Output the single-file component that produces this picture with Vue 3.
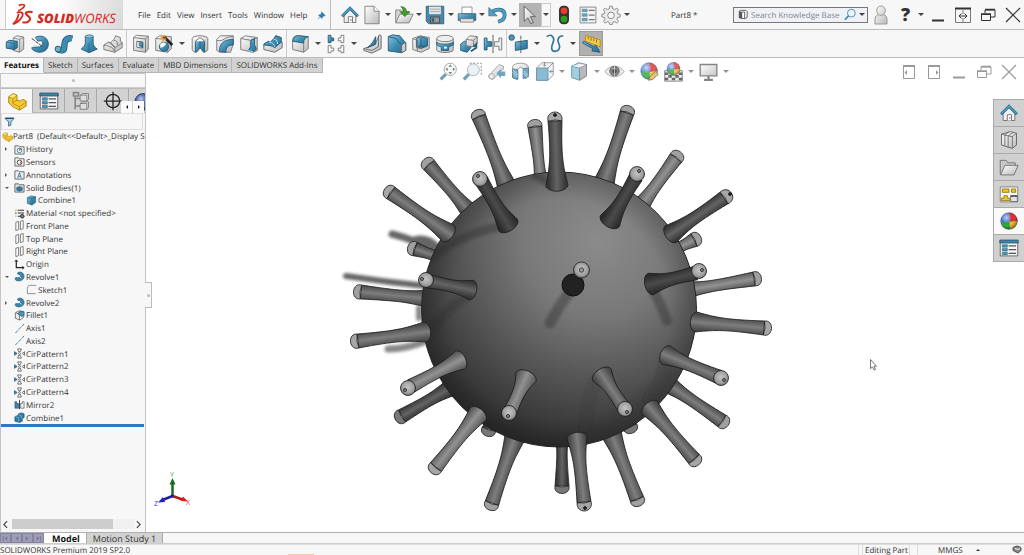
<script setup>
const menus = ['File', 'Edit', 'View', 'Insert', 'Tools', 'Window', 'Help']

const fileTools = [
  { icon: 'new', label: 'New' },
  { icon: 'open', label: 'Open' },
  { icon: 'save', label: 'Save' },
  { icon: 'print', label: 'Print' },
  { icon: 'undo', label: 'Undo' },
]

const ribbon = [
  {
    key: 'a',
    items: [
      { icon: 'extrude', label: 'Extruded Boss' },
      { icon: 'revolve', label: 'Revolved Boss' },
      { icon: 'sweep', label: 'Swept Boss' },
      { icon: 'loft', label: 'Lofted Boss' },
      { icon: 'boundary', label: 'Boundary Boss' },
    ],
  },
  {
    key: 'b',
    items: [
      { icon: 'cut', label: 'Extruded Cut' },
      { icon: 'wizard', label: 'Hole Wizard', menu: true },
      { icon: 'revcut', label: 'Revolved Cut' },
      { icon: 'sweepcut', label: 'Swept Cut' },
      { icon: 'loftcut', label: 'Lofted Cut' },
      { icon: 'boundcut', label: 'Boundary Cut' },
    ],
  },
  {
    key: 'c',
    items: [
      { icon: 'fillet', label: 'Fillet', menu: true },
      { icon: 'pattern', label: 'Linear Pattern', menu: true },
      { icon: 'rib', label: 'Rib' },
      { icon: 'draft', label: 'Draft' },
      { icon: 'shell', label: 'Shell' },
      { icon: 'wrap', label: 'Wrap' },
      { icon: 'intersect', label: 'Intersect' },
      { icon: 'mirror', label: 'Mirror' },
    ],
  },
  {
    key: 'd',
    items: [
      { icon: 'refgeo', label: 'Reference Geometry', menu: true },
      { icon: 'curves', label: 'Curves', menu: true },
      { icon: 'instant', label: 'Instant3D', active: true },
    ],
  },
]

const tabs = ['Features', 'Sketch', 'Surfaces', 'Evaluate', 'MBD Dimensions', 'SOLIDWORKS Add-Ins']

const views = [
  { icon: 'zoomfit', label: 'Zoom to Fit' },
  { icon: 'zoomarea', label: 'Zoom to Area' },
  { icon: 'prev', label: 'Previous View' },
  { icon: 'section', label: 'Section View' },
  { icon: 'orient', label: 'View Orientation', menu: true },
  { icon: 'style', label: 'Display Style', menu: true },
  { icon: 'eye', label: 'Hide/Show Items', menu: true },
  { icon: 'appear', label: 'Edit Appearance' },
  { icon: 'scene', label: 'Apply Scene', menu: true },
  { icon: 'monitor', label: 'View Settings', menu: true },
]

const docControls = ['dockleft', 'dockright', 'min', 'restore', 'close']

const managers = [
  { icon: 'part', label: 'FeatureManager', active: true },
  { icon: 'props', label: 'PropertyManager' },
  { icon: 'config', label: 'ConfigurationManager' },
  { icon: 'target', label: 'DimXpertManager' },
  { icon: 'ballhalf', label: 'DisplayManager' },
]

const taskPane = [
  { icon: 'home', label: 'Resources' },
  { icon: 'books', label: 'Design Library' },
  { icon: 'folder', label: 'File Explorer' },
  { icon: 'palette', label: 'View Palette' },
  { icon: 'ball', label: 'Appearances', active: true },
  { icon: 'props', label: 'Custom Properties' },
]

const tree = [
  { t: 'Part8  (Default<<Default>_Display S', i: 'part', root: true },
  { t: 'History', i: 't-history', x: 'closed' },
  { t: 'Sensors', i: 't-sensor' },
  { t: 'Annotations', i: 't-note', x: 'closed' },
  { t: 'Solid Bodies(1)', i: 't-solid', x: 'open' },
  { t: 'Combine1', i: 't-cube', child: true },
  { t: 'Material <not specified>', i: 't-material' },
  { t: 'Front Plane', i: 't-plane' },
  { t: 'Top Plane', i: 't-plane' },
  { t: 'Right Plane', i: 't-plane' },
  { t: 'Origin', i: 't-origin' },
  { t: 'Revolve1', i: 't-revolve', x: 'open' },
  { t: 'Sketch1', i: 't-sketch', child: true },
  { t: 'Revolve2', i: 't-revolve', x: 'closed' },
  { t: 'Fillet1', i: 't-fillet' },
  { t: 'Axis1', i: 't-axis' },
  { t: 'Axis2', i: 't-axis' },
  { t: 'CirPattern1', i: 't-cir' },
  { t: 'CirPattern2', i: 't-cir' },
  { t: 'CirPattern3', i: 't-cir' },
  { t: 'CirPattern4', i: 't-cir' },
  { t: 'Mirror2', i: 't-mirror' },
  { t: 'Combine1', i: 't-combine' },
]

/* Each spike runs from base (bx, by) to tip (tx, ty); bw is the half width at the base. */
const back = [
  { bx: 508, by: 189, tx: 479, ty: 117, bw: 10 },
  { bx: 541, by: 182, tx: 535, ty: 127, bw: 7, tone: 'light' },
  { bx: 470, by: 212, tx: 429, ty: 165, bw: 9 },
  { bx: 439, by: 257, tx: 415, ty: 249, bw: 7 },
  { bx: 430, by: 299, tx: 361, ty: 292, bw: 9 },
  { bx: 603, by: 186, tx: 627, ty: 113, bw: 11 },
  { bx: 640, by: 207, tx: 676, ty: 158, bw: 9, tone: 'light' },
  { bx: 676, by: 249, tx: 694, ty: 240, bw: 7, tone: 'light' },
  { bx: 688, by: 290, tx: 754, ty: 279, bw: 8, tone: 'light' },
  { bx: 452, by: 387, tx: 402, ty: 416, bw: 9, tone: 'dark' },
  { bx: 492, by: 420, tx: 489, ty: 429, bw: 7, tone: 'dark' },
  { bx: 516, by: 434, tx: 492, ty: 503, bw: 11 },
  { bx: 562, by: 436, tx: 562, ty: 486, bw: 7, tone: 'dark' },
  { bx: 610, by: 430, tx: 637, ty: 499, bw: 11 },
  { bx: 628, by: 420, tx: 630, ty: 426, bw: 6, tone: 'dark' },
  { bx: 668, by: 384, tx: 722, ty: 421, bw: 9 },
]
const front = [
  { bx: 448, by: 233, tx: 391, ty: 193, bw: 10 },
  { bx: 425, by: 332, tx: 358, ty: 341, bw: 10 },
  { bx: 696, by: 322, tx: 764, ty: 328, bw: 10 },
  { bx: 671, by: 234, tx: 724, ty: 198, bw: 10, tone: 'dark', hole: [730, 194] },
  { bx: 478, by: 414, tx: 436, ty: 467, bw: 10, tone: 'light' },
  { bx: 650, by: 408, tx: 694, ty: 459, bw: 10 },
  { bx: 577, by: 438, tx: 584, ty: 502, bw: 10, hole: [585, 508] },
  { bx: 557, by: 185, tx: 555, ty: 121, bw: 11, tone: 'dark', hole: [555, 115] },
  { bx: 508, by: 225, tx: 481, ty: 180, bw: 11, tone: 'deep', ball: [480, 179], hole: [478, 176] },
  { bx: 610, by: 221, tx: 636, ty: 177, bw: 11, tone: 'deep', ball: [637, 174], hole: [639, 171] },
  { bx: 471, by: 290, tx: 428, ty: 281, bw: 10, tone: 'dark', ball: [426, 280], hole: [422, 279] },
  { bx: 651, by: 284, tx: 696, ty: 273, bw: 11, tone: 'deep', ball: [699, 271], hole: [702, 270] },
  { bx: 460, by: 360, tx: 411, ty: 386, bw: 10, tone: 'light', ball: [408, 388], hole: [405, 390] },
  { bx: 526, by: 377, tx: 510, ty: 412, bw: 11, tone: 'light', ball: [509, 413], hole: [508, 416] },
  { bx: 602, by: 375, tx: 624, ty: 408, bw: 11, ball: [625, 409], hole: [627, 412] },
  { bx: 666, by: 355, tx: 719, ty: 377, bw: 10, ball: [721, 378], hole: [724, 380] },
]

const shape = (s) => {
  const dx = s.tx - s.bx
  const dy = s.ty - s.by
  const len = Math.hypot(dx, dy)
  return { len, rot: (Math.atan2(dy, dx) * 180) / Math.PI }
}
const place = (s) => `translate(${s.bx} ${s.by}) rotate(${shape(s).rot})`
const body = (s) => {
  const l = shape(s).len
  const w = s.bw
  return `M0 ${-w} C${l * 0.3} ${-w * 0.6} ${l * 0.45} -5 ${l} -7 L${l} 7 C${l * 0.45} 5 ${l * 0.3} ${w * 0.6} 0 ${w} C${-w * 0.75} ${w * 0.9} ${-w * 0.75} ${-w * 0.9} 0 ${-w}Z`
}
const cap = (s) => {
  const l = shape(s).len
  const r = l + (s.hole ? 12 : 10)
  return `M${l} -7 C${r} -9 ${r} 9 ${l} 7 Q${l + 2} 0 ${l} -7Z`
}
</script>

<template>
  <svg class="library" aria-hidden="true">
    <defs>
      <linearGradient id="blue" x1="0" y1="0" x2="1" y2="1">
        <stop offset="0" stop-color="#8fc6dd" /><stop offset="0.5" stop-color="#3f8db3" /><stop offset="1" stop-color="#286a8d" />
      </linearGradient>
      <linearGradient id="grey" x1="0" y1="0" x2="1" y2="1">
        <stop offset="0" stop-color="#ffffff" /><stop offset="1" stop-color="#b9b9b9" />
      </linearGradient>
      <radialGradient id="shine" cx="0.35" cy="0.3" r="0.7">
        <stop offset="0" stop-color="#fff" stop-opacity="0.65" /><stop offset="0.5" stop-color="#fff" stop-opacity="0" /><stop offset="1" stop-color="#000" stop-opacity="0.4" />
      </radialGradient>
    </defs>

    <symbol id="i-home" viewBox="0 0 24 24">
      <path d="M5 12v9h14v-9l-7-7z" fill="#f0f0f0" stroke="#666" />
      <path d="M10 21v-7h5v7" fill="#fff" stroke="#666" /><path d="M13 17v2" stroke="#444" />
      <path d="M2.500 13.500 12 4l9.500 9.500" fill="none" stroke="#275f7e" stroke-width="3.400" /><path d="M2.500 13.200 12 3.700l9.500 9.500" fill="none" stroke="#4a9cc1" stroke-width="2" />
    </symbol>
    <symbol id="i-new" viewBox="0 0 24 24">
      <path d="M3.500 1.500h11l6 6v15h-17z" fill="url(#grey)" stroke="#777" /><path d="M14.500 1.500v6h6" fill="#fff" stroke="#777" />
    </symbol>
    <symbol id="i-open" viewBox="0 0 24 24">
      <path d="M2 21V6h6l2 2h8v4" fill="#d5d5d5" stroke="#777" /><path d="M2 21.500 7 11h16l-5 10.500z" fill="url(#grey)" stroke="#777" />
      <path d="M8 2c5 0 7 2 7 6h4l-6 6-6-6h4c0-3-1-4-3-6z" fill="#419c2c" stroke="#2c6d1e" stroke-width=".6" />
    </symbol>
    <symbol id="i-save" viewBox="0 0 24 24">
      <path d="M1.500 1.500h21v21h-18l-3-3z" fill="#4689aa" stroke="#2c5c78" /><path d="M5 2h14v9H5z" fill="#e8e8e8" /><path d="M6 5h12M6 8h12" stroke="#999" />
      <path d="M6.500 14.500h11v7h-11z" fill="#999" stroke="#444" /><path d="M8 16h3v4H8z" fill="#2d5870" />
    </symbol>
    <symbol id="i-print" viewBox="0 0 24 24">
      <path d="M6 2.500h12v8H6z" fill="#fff" stroke="#888" /><path d="M1.500 10.500h21v8h-21z" fill="url(#blue)" stroke="#2c5c78" /><path d="M4 16.500h16v4H4z" fill="#e6e6e6" stroke="#777" />
    </symbol>
    <symbol id="i-undo" viewBox="0 0 24 24">
      <path d="M5 8c8-5 15-2 15 4 0 4-3 7-8 8" fill="none" stroke="#2b6788" stroke-width="4.500" /><path d="M5 8c8-5 15-2 15 4 0 4-3 7-8 8" fill="none" stroke="#539dc0" stroke-width="3" /><path d="M1 3v10h10z" fill="#539dc0" stroke="#2b6788" stroke-width=".8" />
    </symbol>
    <symbol id="i-select" viewBox="0 0 24 24">
      <path d="M5 1.500v18l4.500-4 3.500 7 3-1.500-3.500-7h6z" fill="url(#grey)" stroke="#555" />
    </symbol>
    <symbol id="i-traffic" viewBox="0 0 24 24">
      <rect x="6" y="1" width="12" height="22" rx="5" fill="#333" /><circle cx="12" cy="7" r="4" fill="#ed3b2d" /><circle cx="12" cy="17" r="4" fill="#2f9b22" />
    </symbol>
    <symbol id="i-options" viewBox="0 0 24 24">
      <path d="M2.500 2.500h19v19h-19z" fill="#f3f3f3" stroke="#777" /><path d="M5 5h6v3H5zM5 10.500h6v3H5zM5 16h6v3H5z" fill="#68a6c3" stroke="#3f708a" stroke-width=".6" /><path d="M13 6.500h7M13 12h7M13 17.500h7" stroke="#777" stroke-width="1.500" />
    </symbol>
    <symbol id="i-gear" viewBox="0 0 24 24">
      <path d="M10.500 1.500h3l.7 3.200 2 .8 2.800-1.800 2 2-1.800 2.800.8 2 3 .7v3l-3 .7-.8 2 1.800 2.800-2 2-2.800-1.800-2 .8-.7 3h-3l-.7-3-2-.8L5 21.700l-2-2 1.800-2.800-.8-2-3-.7v-3l3-.7.8-2L3 5.700l2-2 2.800 1.800 2-.8z" fill="#ececec" stroke="#777" /><circle cx="12" cy="12.500" r="4" fill="#f7f7f7" stroke="#777" />
    </symbol>

    <symbol id="i-extrude" viewBox="0 0 24 24">
      <path d="M10 5.500 14.500 3l7 1.500v13L17 21l-7-2z" fill="url(#grey)" stroke="#777" /><path d="M17 7v14M10 5.500 17 7l4.500-2.500" fill="none" stroke="#888" />
      <path d="m2.500 10 3-2 9 1v7l-3 2-9-1.500z" fill="url(#blue)" stroke="#255b78" /><path d="m2.500 10 9 1.500v6.500M11.500 11.500l3-2.500" fill="none" stroke="#255b78" stroke-width=".7" />
    </symbol>
    <symbol id="i-revolve" viewBox="0 0 24 24">
      <path d="M7 5c4-3 13-2 14 6s-7 12-14 9c-3-1-4-3-4-4l7-1c2 1 5-1 5-4s-3-3-5-2z" fill="url(#blue)" stroke="#255b78" /><path d="m3 6 12 9" stroke="#222" stroke-dasharray="4 1" /><path d="M3 16c1-2 5-3 7-1" stroke="#bde0ee" fill="none" />
    </symbol>
    <symbol id="i-sweep" viewBox="0 0 24 24">
      <path d="M5 18c10 3 6-2 8-8 1-4 4-5 8-4" fill="none" stroke="#22566f" stroke-width="7" /><path d="M5 18c10 3 6-2 8-8 1-4 4-5 8-4" fill="none" stroke="#3f8cb2" stroke-width="5.500" /><circle cx="5.500" cy="17.500" r="3.200" fill="#6fb1ce" stroke="#22566f" />
    </symbol>
    <symbol id="i-loft" viewBox="0 0 24 24">
      <path d="M8 3.500v7c0 3-2 5-4.500 7l8.500 4 9-4c-3-2-4.500-4-4.500-7v-7z" fill="url(#blue)" stroke="#255b78" /><ellipse cx="12.300" cy="3.700" rx="4.300" ry="1.700" fill="#8fc6dd" stroke="#255b78" stroke-width=".7" /><path d="M12 11v10" stroke="#255b78" stroke-width=".6" />
    </symbol>
    <symbol id="i-boundary" viewBox="0 0 24 24">
      <path d="m2 13 5-3 2 1 4-4 2-4 5 2v4l2 1v6l-8 5-12-3z" fill="url(#grey)" stroke="#777" /><path d="M2 14c3-2 5 1 7 1s3 3 5 5M9 11c3 1 4 3 5 5l8-5M13 8c3 0 4 2 4 5M7 10c3 0 3 3 7 6v5" fill="none" stroke="#777" />
    </symbol>
    <symbol id="i-boundcut" viewBox="0 0 24 24">
      <path d="m2 13 5-3 2 1 4-4 2-4 5 2v4l2 1v6l-8 5-12-3z" fill="url(#grey)" stroke="#666" /><path d="m2 12 5-3 2 1 4-4 2-3 6 2v5l-7 6c-3-3-8-2-12-3z" fill="url(#blue)" stroke="#255b78" /><path d="M8 10c3 0 5 2 6 5M13 7c3 0 4 2 4 5" fill="none" stroke="#cce9f4" />
    </symbol>
    <symbol id="i-cut" viewBox="0 0 24 24">
      <path d="m5 5 3-2.500 13 1v14l-3 3.500-13-2z" fill="url(#grey)" stroke="#777" /><path d="m5 5 13 1.500V21M18 6.500l3-3" fill="none" stroke="#777" /><path d="M8.500 9v6.500l6.500 1V10z" fill="#fff" stroke="#666" /><path d="M11 9.500v4.500l4 2V10z" fill="url(#blue)" stroke="#255b78" stroke-width=".7" />
    </symbol>
    <symbol id="i-wizard" viewBox="0 0 24 24">
      <path d="m3 6 4-3 13 1v13l-4 4-13-2z" fill="url(#grey)" stroke="#777" /><path d="m3 6 13 1v14" fill="none" stroke="#777" /><circle cx="12" cy="15" r="5" fill="url(#blue)" stroke="#255b78" /><path d="M8 12a5 5 0 0 1 6-1c0 3-3 5-6 5z" fill="#fff" />
      <path d="m12 4 9 9" stroke="#222" stroke-width="3" /><path d="m9 1 1.500 2.500L14 2l-1 3 2 2-3 .5-1.500 2.500L9.500 7 6 6l3-1.500z" fill="#efa348" /><path d="m11 4 2 2" stroke="#8a4b17" stroke-width="2" />
    </symbol>
    <symbol id="i-revcut" viewBox="0 0 24 24">
      <path d="M3.500 6c0-4 17-4 17 0v12c0 2-4 3-5 3l-3-5-4 5c-2 0-5-1-5-3z" fill="url(#grey)" stroke="#777" /><path d="m12 6-5 3v12l5-5 5 5V9z" fill="url(#blue)" stroke="#255b78" /><path d="M12 6v10" stroke="#255b78" /><path d="m7 9 5-4 5 4" fill="#fff" stroke="#777" />
    </symbol>
    <symbol id="i-sweepcut" viewBox="0 0 24 24">
      <path d="m3 7 4-4h14v9l-3 9H6l-3-2z" fill="url(#grey)" stroke="#777" /><path d="M6 20c0-8 4-13 15-13v6c-6 0-8 3-8 8z" fill="url(#blue)" stroke="#255b78" /><path d="M3 8c8 2 7-4 18-4M6 20l4-1" fill="none" stroke="#777" />
    </symbol>
    <symbol id="i-loftcut" viewBox="0 0 24 24">
      <path d="m3 6 5-3 13 2v14l-5 2-13-3z" fill="url(#grey)" stroke="#777" /><path d="m3 6 11 2v13M14 8l7-3" fill="none" stroke="#777" /><path d="M14 8v7l-3 4 6 2 3-4-2-4V6z" fill="url(#blue)" stroke="#255b78" /><path d="m11 19 6 2" stroke="#cce9f4" />
    </symbol>
    <symbol id="i-fillet" viewBox="0 0 24 24">
      <path d="M4 8c0-3 2-5 5-5l12 1v13l-5 4-12-3z" fill="url(#grey)" stroke="#777" /><path d="M4 9c1-4 3-6 6-6l11 1c-3 1-5 3-5 7z" fill="url(#blue)" stroke="#255b78" /><path d="M16 11v10" stroke="#777" />
    </symbol>
    <symbol id="i-pattern" viewBox="0 0 24 24">
      <path d="M3.500 2.500h3v3h3v3h-3v2h-3z" fill="url(#blue)" stroke="#255b78" /><path d="M20.500 2.500h-3v3h-3v3h3v2h3zM3.500 13.500h3v3h3v3h-3v2h-3zM20.500 13.500h-3v3h-3v3h3v2h3z" fill="#fff" stroke="#777" />
    </symbol>
    <symbol id="i-rib" viewBox="0 0 24 24">
      <path d="m3 17 12-4 5-11 2 1v14l-10 5-9-3z" fill="url(#grey)" stroke="#666" /><path d="m7 16 9-4V4c-2 5-5 9-9 12z" fill="url(#blue)" stroke="#255b78" /><path d="m3 17 9 2 7-4V3" fill="none" stroke="#666" />
    </symbol>
    <symbol id="i-draft" viewBox="0 0 24 24">
      <path d="M2.500 4 7 2l8 1 6.500 8v8l-4.500 2.500-14.500-2z" fill="url(#blue)" stroke="#255b78" /><path d="m2.500 4 8 2 6.500 7" fill="none" stroke="#255b78" /><path d="m17 13 4.500-3v9L17 21.500z" fill="#cfcfcf" stroke="#666" />
    </symbol>
    <symbol id="i-shell" viewBox="0 0 24 24">
      <path d="m3 6 8-3 10 2v12l-9 4-9-3z" fill="url(#grey)" stroke="#777" /><path d="m7 6 4-2 8 2v8l-7 3-5-2z" fill="url(#blue)" stroke="#255b78" /><path d="m12 5v9l6 1M12 14l-5 2" fill="none" stroke="#255b78" /><path d="M3 6l5 2v12M8 8v8l4 1" fill="none" stroke="#777" />
    </symbol>
    <symbol id="i-wrap" viewBox="0 0 24 24">
      <path d="M3 6v13c2 3 16 3 18 0V6" fill="url(#grey)" stroke="#777" /><ellipse cx="12" cy="6" rx="9" ry="3.500" fill="#eee" stroke="#777" /><path d="M3 10c4 3 14 3 18 0v3c-3 2-5 1-5 3v3H8v-3c0-2-3-1-5-3z" fill="url(#blue)" stroke="#255b78" /><path d="M11 15h3v2h-3z" fill="#fff" />
    </symbol>
    <symbol id="i-intersect" viewBox="0 0 24 24">
      <path d="m3 12 4-3h7v7l-4 5-7-2z" fill="url(#blue)" stroke="#255b78" /><path d="m9 7 4-4 8 1v7l-4 4-8-1z" fill="url(#grey)" stroke="#777" /><path d="m9 7 8 1v7M17 8l4-4" fill="none" stroke="#777" /><path d="m17 15 3-3v4l-6 4" fill="none" stroke="#255b78" stroke-width="2" />
    </symbol>
    <symbol id="i-mirror" viewBox="0 0 24 24">
      <path d="M2.500 5.500h3v4h5v5h-5v4h-3z" fill="url(#blue)" stroke="#255b78" /><path d="M21.500 5.500h-3v4h-5v5h5v4h3z" fill="#eee" stroke="#777" /><path d="M12 2v20" stroke="#555" />
    </symbol>
    <symbol id="i-refgeo" viewBox="0 0 24 24">
      <circle cx="4" cy="5" r="3" fill="#4a96ba" stroke="#255b78" /><path d="m8 10 13-2v9L8 19z" fill="url(#blue)" stroke="#255b78" /><path d="M14 3v19" stroke="#555" stroke-dasharray="4 1" />
    </symbol>
    <symbol id="i-curves" viewBox="0 0 24 24">
      <path d="M3 4c5-4 9 1 7 6s-3 10 2 10 6-5 4-9 0-8 5-8" fill="none" stroke="#2f7699" stroke-width="1.800" />
    </symbol>
    <symbol id="i-instant" viewBox="0 0 24 24">
      <path d="m6 2.500 16 5V15L6 9z" fill="#f7ca45" stroke="#af8c27" /><path d="M9 4v3M12 5v3.500M15 6v3M18 7v3.500" stroke="#8f6f17" /><path d="m3 11 11 6-1 2.500 9 1.500-5-8-1.500 2L4 9z" fill="url(#blue)" stroke="#255b78" />
    </symbol>

    <symbol id="i-zoomfit" viewBox="0 0 24 24">
      <path d="m9 15-6 6" stroke="#4989aa" stroke-width="3.500" /><circle cx="14" cy="9.500" r="7" fill="#f5f8fa" stroke="#888" /><path d="m14 4 2 2.500h-4zm0 11 2-2.500h-4zM8.500 9.500 11 7.500v4zm11 0L17 7.500v4z" fill="#555" />
    </symbol>
    <symbol id="i-zoomarea" viewBox="0 0 24 24">
      <path d="M9 2.500h13v14" fill="none" stroke="#555" stroke-dasharray="2 2" /><path d="m8 15-6 6" stroke="#4989aa" stroke-width="3.500" /><circle cx="13" cy="10" r="6.800" fill="#e6eff5" stroke="#8d9ba5" />
    </symbol>
    <symbol id="i-prev" viewBox="0 0 24 24">
      <path d="M3 17 15 4l5 2v3L8 21c-3 0-5-2-5-4z" fill="url(#grey)" stroke="#888" /><circle cx="6.500" cy="17.500" r="3" fill="#eee" stroke="#888" /><path d="m12 14 5-5v3h5v5h-5v3z" fill="#4c91b1" />
    </symbol>
    <symbol id="i-section" viewBox="0 0 24 24">
      <path d="M3 7c0-6 18-6 18 0v10c-1 2-3 3-4 3V10l-5-3-4 3v11l-5-2z" fill="url(#grey)" stroke="#777" /><path d="M3 9l6 1v11l-6-2zM15 9l6-1v10l-6 2z" fill="#5499b8" stroke="#255b78" /><path d="m3 13 5 5m-5-8 6 6m6-5 6 6m-6-3 5 5" stroke="#bbdced" />
    </symbol>
    <symbol id="i-orient" viewBox="0 0 24 24">
      <path d="m3 8 6-6h13v14l-6 6H3z" fill="#f6f6f6" stroke="#777" /><path d="M3 8h13v14H3z" fill="#6eabc7" stroke="#397c9d" /><path d="m16 8 6-6M12 1v5m-2-2 2 2 2-2M22 12h-4m2-2-2 2 2 2" fill="none" stroke="#666" />
    </symbol>
    <symbol id="i-style" viewBox="0 0 24 24">
      <path d="m3 6 8-4 9 2v13l-8 5-9-3z" fill="#8fc1d7" stroke="#397c9d" /><path d="m12 8 8-4v13l-8 5z" fill="#aaa" stroke="#666" /><path d="m3 6 9 2v14" fill="none" stroke="#397c9d" /><path d="m4 6 8-3 7 1.500-7 3z" fill="#eee" />
    </symbol>
    <symbol id="i-eye" viewBox="0 0 24 24">
      <path d="M1 12c6-8 16-8 22 0-6 8-16 8-22 0z" fill="#eaeaea" stroke="#888" /><circle cx="12" cy="11.500" r="5.500" fill="#666" stroke="#444" /><circle cx="12" cy="11.500" r="2.500" fill="#222" /><path d="M12 5v13M9 8l4 1" stroke="#bbb" />
    </symbol>
    <symbol id="i-ball" viewBox="0 0 24 24">
      <circle cx="12" cy="12" r="10" fill="#3d6ddb" /><path d="M12 2a10 10 0 0 1 10 10l-9 1z" fill="#dc2424" /><path d="M22 12a10 10 0 0 1-9 10l-1-9z" fill="#f1bf20" /><path d="M2.500 14c3-2 6-1 10-1l.5 9A10 10 0 0 1 2.500 14z" fill="#20a62b" /><circle cx="12" cy="12" r="10" fill="url(#shine)" stroke="#444" stroke-width=".5" />
    </symbol>
    <symbol id="i-appear" viewBox="0 0 24 24">
      <use href="#i-ball" width="23" height="23" /><path d="m11 22 2-5 6-5 3 3-6 6z" fill="#ddb45d" stroke="#775b24" />
    </symbol>
    <symbol id="i-scene" viewBox="0 0 24 24">
      <path d="M2 11h20v12H2z" fill="#eee" stroke="#555" /><path d="M2 13h4v3H2zM6 16h4v3H6zM2 19h4v3H2zM10 19h4v3h-4zM14 16h4v3h-4zM18 13h4v3h-4zM18 19h4v3h-4z" fill="#444" /><use href="#i-ball" x="3" y="0" width="18" height="18" />
    </symbol>
    <symbol id="i-monitor" viewBox="0 0 24 24">
      <path d="M2.500 4h19v13h-19z" fill="url(#grey)" stroke="#666" stroke-width="1.500" /><path d="M12 17v4M7 21.500h10" stroke="#666" stroke-width="2.500" />
    </symbol>

    <symbol id="i-part" viewBox="0 0 24 24">
      <path d="m2 7 5-4 5 2v6l4 1 3-2 4 2v6l-8 5-8-4-5-5z" fill="#f5c92f" stroke="#9d7a12" /><path d="m2 7 5 2 5-4M7 9v6l8 4 8-6M15 19v4M12 11l-5 3" fill="none" stroke="#b48c18" /><path d="m3 7 4-3 4 1.500L7 8z" fill="#ffe889" />
    </symbol>
    <symbol id="i-props" viewBox="0 0 24 24">
      <path d="M1.500 3.500h21v18h-21z" fill="#f5f5f5" stroke="#555" /><path d="M1 2.500h22V6H1z" fill="#3d86aa" stroke="#24556e" /><path d="M4 8h6v3H4zM4 12.500h6v3H4zM4 17h6v3H4z" fill="#4a95b9" stroke="#24556e" stroke-width=".6" /><path d="M11.500 9.500h9M11.500 14h9M11.500 18.500h9" stroke="#555" stroke-width="1.500" />
    </symbol>
    <symbol id="i-config" viewBox="0 0 24 24">
      <path d="M3 2h6v4H3zM5 6v16M5 9h6M5 18h6" fill="none" stroke="#888" stroke-width="2" /><path d="m11 5 3-2h7v7l-2 2h-8zM11 15l3-2h7v7l-2 2h-8z" fill="#ddd" stroke="#777" /><path d="M11 5h8v7M11 15h8v7" fill="none" stroke="#777" />
    </symbol>
    <symbol id="i-target" viewBox="0 0 24 24">
      <circle cx="12" cy="12" r="8" fill="none" stroke="#222" stroke-width="1.500" /><path d="M12 1v22M1 12h22" stroke="#222" stroke-width="1.500" />
    </symbol>
    <symbol id="i-ballhalf" viewBox="0 0 24 24"><circle cx="17" cy="13" r="10" fill="#3d62b5" stroke="#333" /><circle cx="17" cy="13" r="9" fill="url(#shine)" /></symbol>
    <symbol id="i-books" viewBox="0 0 24 24">
      <path d="m3 5 11-3 7 2v14l-5 4-13-4z" fill="url(#grey)" stroke="#555" /><path d="m3 5 4 1v13M7 6l4 1v14M11 7l5 1v14M16 8l5-4M7 6l5-4M11 7l6-4" fill="none" stroke="#666" />
    </symbol>
    <symbol id="i-folder" viewBox="0 0 24 24">
      <path d="M1.500 21V4h7l2 3h9v4" fill="#c9c9c9" stroke="#666" /><path d="M2 21.500 7 10h16l-5 11.500z" fill="url(#grey)" stroke="#666" />
    </symbol>
    <symbol id="i-palette" viewBox="0 0 24 24">
      <path d="M1.500 3.500h21v18h-21z" fill="#f5f5f5" stroke="#777" /><path d="M4 6h8v4H4zM15 6h5v4h-5zM6 14h4v3h3v3H3v-3h3z" fill="#f5c518" stroke="#8f7310" /><path d="M14 14h8v7h-8z" fill="#e2e2e2" stroke="#666" /><path d="M14 14.500h8" stroke="#555" stroke-width="2" />
    </symbol>

    <symbol id="i-t-history" viewBox="0 0 12 12"><path d="M1 11V2h4l1 1h5v8z" fill="#eee" stroke="#666" /><circle cx="6" cy="7" r="2.500" fill="#fff" stroke="#3a7fa3" /><path d="M6 5v2l2-2" fill="none" stroke="#333" stroke-width=".7" /></symbol>
    <symbol id="i-t-sensor" viewBox="0 0 12 12"><path d="M1 11V2h4l1 1h5v8z" fill="#eee" stroke="#666" /><circle cx="6" cy="7" r="2.500" fill="#fff" stroke="#444" /><path d="m6 7 2-1v3z" fill="#e23b27" /></symbol>
    <symbol id="i-t-note" viewBox="0 0 12 12"><path d="M1 11V2h4l1 1h5v8z" fill="#eee" stroke="#666" /><path d="m4 10 2-6 2 6M5 8h2" fill="none" stroke="#2d7ba3" /></symbol>
    <symbol id="i-t-solid" viewBox="0 0 12 12"><path d="M1 11V2h4l1 1h5v8z" fill="#ddd" stroke="#666" /><path d="m3 6 3-1 3 1v3l-3 1-3-1z" fill="#317ca2" stroke="#174d69" stroke-width=".6" /></symbol>
    <symbol id="i-t-cube" viewBox="0 0 12 12"><path d="m1.500 3 4-2 5 1v6l-4 3-5-2z" fill="url(#blue)" stroke="#255b78" stroke-width=".7" /><path d="m1.500 3 5 1v7M6.500 4l4-2" fill="none" stroke="#255b78" stroke-width=".7" /></symbol>
    <symbol id="i-t-material" viewBox="0 0 12 12"><path d="M4 2.500h7M4 5.500h7M4 9h3" stroke="#333" stroke-width="1.200" /><circle cx="2" cy="2.500" r="1" fill="#f2b623" /><circle cx="2" cy="5.500" r="1" fill="#3c8db1" /><circle cx="2" cy="9" r="1" fill="#ccc" /><circle cx="9" cy="9" r="2" fill="#777" stroke="#333" /></symbol>
    <symbol id="i-t-plane" viewBox="0 0 12 12"><path d="M2 2.500v9l3-1v-9zM7 1.500v9l3-1v-9z" fill="#fff" stroke="#666" stroke-width=".9" /></symbol>
    <symbol id="i-t-origin" viewBox="0 0 12 12"><path d="M2.500 1v8.500H11" fill="none" stroke="#222" stroke-width="1.300" /><path d="m1 3 1.500-2L4 3M9 8l2 1.500L9 11" fill="none" stroke="#222" /></symbol>
    <symbol id="i-t-revolve" viewBox="0 0 12 12"><path d="M4 2c3-2 7 0 7 4s-5 6-9 4c-1-1-1-2 0-3 2 1 5 0 5-2S5 4 4 4z" fill="#3d87ac" stroke="#235974" stroke-width=".7" /><path d="m3 3 5 5" stroke="#d8edf6" /></symbol>
    <symbol id="i-t-sketch" viewBox="0 0 12 12"><path d="M11 1.500H3.500Q1.500 2 1.500 5v5.500h9" fill="none" stroke="#888" /></symbol>
    <symbol id="i-t-fillet" viewBox="0 0 12 12"><path d="m1.500 3 4-2 5 1v6l-4 3-5-2z" fill="#eee" stroke="#555" stroke-width=".8" /><path d="m4 4 3-3 4 1v4l-3 1z" fill="#4b94b6" stroke="#255b78" stroke-width=".7" /><path d="m2 3 4 2v6" fill="none" stroke="#555" stroke-width=".7" /></symbol>
    <symbol id="i-t-axis" viewBox="0 0 12 12"><path d="M1.500 11 11 1" stroke="#3b7fa3" stroke-dasharray="4 1" /></symbol>
    <symbol id="i-t-cir" viewBox="0 0 12 12"><path d="M.5 4 3.500 6l-3 2z" fill="#3d87ac" stroke="#255b78" stroke-width=".8" /><path d="M4 1h4L7 4H5zM4 11h4L7 8H5zM11.500 4 9 6l2.500 2z" fill="#fff" stroke="#555" stroke-width=".9" /><circle cx="6" cy="6" r="1" fill="#fff" stroke="#555" stroke-width=".8" /></symbol>
    <symbol id="i-t-mirror" viewBox="0 0 12 12"><path d="M1 3v7h4V5H3V3z" fill="#3d87ac" stroke="#255b78" stroke-width=".7" /><path d="M11 3v7H7V5h2V3z" fill="#eee" stroke="#666" stroke-width=".8" /><path d="M6 1v10" stroke="#333" /></symbol>
    <symbol id="i-t-combine" viewBox="0 0 12 12"><path d="m1 5 3-1 1-2 3-1 3 1v4L9 7v3l-3 1.500L1 10z" fill="#317ca2" stroke="#174d69" stroke-width=".7" /><path d="m1 5 4 1v5M5 3l3 1v3" fill="none" stroke="#93c7de" stroke-width=".6" /></symbol>

    <symbol id="i-min" viewBox="0 0 16 16"><path d="M2 13.500h12" stroke="currentColor" stroke-width="2" /></symbol>
    <symbol id="i-span" viewBox="0 0 16 16"><path d="M.5 1.500h15v14H.5zM8 3v4M8 11v4" fill="none" stroke="#777" /><path d="M0 1.500h16" stroke="#333" stroke-width="2" /><path d="M4 9h8M6.500 6.500 4 9l2.500 2.500M9.500 6.500 12 9l-2.500 2.500" fill="none" stroke="#333" /></symbol>
    <symbol id="i-restore" viewBox="0 0 16 16"><path d="M5 6V3h10v7h-4M1.500 7.500h9v6h-9z" fill="none" stroke="currentColor" /><path d="M5 2.500h10M1 7h10" stroke="currentColor" stroke-width="1.600" /></symbol>
    <symbol id="i-close" viewBox="0 0 16 16"><path d="m1 1 14 14M15 1 1 15" stroke="currentColor" stroke-width="1.200" /></symbol>
    <symbol id="i-dockleft" viewBox="0 0 16 16"><path d="M2.500 2.500h11v12h-11z" fill="#fff" stroke="currentColor" /><path d="M2 2h12" stroke="currentColor" stroke-width="2" /><path d="M6 6v5L3.500 8.500z" fill="currentColor" /></symbol>
    <symbol id="i-dockright" viewBox="0 0 16 16"><path d="M2.500 2.500h11v12h-11z" fill="#fff" stroke="currentColor" /><path d="M2 2h12" stroke="currentColor" stroke-width="2" /><path d="M10 6v5l2.500-2.500z" fill="currentColor" /></symbol>
  </svg>

  <div class="app">
    <header class="titlebar">
      <div class="brand">
        <svg class="mark" viewBox="0 0 24 24" aria-hidden="true">
          <path d="M8 2.500c6-2 8-.5 4 3-1.500 1.500-3 2-4.500 2.500" fill="none" stroke="#d9291c" stroke-width="1.700" />
          <path d="M6 10c6-1.500 8 1 4.500 6-2 3-5 5-8.500 6 3-2 5-6 6-10.500" fill="none" stroke="#d9291c" stroke-width="1.900" />
          <path d="M22.500 9.500c-6-1-9 .5-5.500 3.500 3 2 4 4 1.500 6-1.500 1.500-4.500 1.500-6.500 1" fill="none" stroke="#d9291c" stroke-width="2.200" />
        </svg>
        <span class="word"><b>SOLID</b>WORKS</span>
      </div>
      <nav class="menus" aria-label="Main menu">
        <button v-for="m in menus" :key="m" type="button">{{ m }}</button>
        <button class="pin" type="button" aria-label="Pin menu">
          <svg viewBox="0 0 12 12"><path d="m6 1 5 5-2 .5L7 8.500 6.500 10 2 5.500l2-.5 2-2zM4 8l-3 3" fill="#2e80b4" stroke="#2e80b4" stroke-width=".8" /></svg>
        </button>
      </nav>
      <div class="quick">
        <button class="tool" type="button" aria-label="Home"><svg><use href="#i-home" /></svg></button>
        <div class="files">
          <div v-for="f in fileTools" :key="f.icon" class="split">
            <button class="tool" type="button" :aria-label="f.label"><svg><use :href="'#i-' + f.icon" /></svg></button>
            <button class="caret" type="button" :aria-label="f.label + ' menu'"></button>
          </div>
        </div>
        <button class="tool picked" type="button" aria-label="Select"><svg><use href="#i-select" /></svg></button>
        <button class="caret boxed" type="button" aria-label="Select menu"></button>
        <button class="tool spaced" type="button" aria-label="Rebuild"><svg><use href="#i-traffic" /></svg></button>
        <button class="tool" type="button" aria-label="File properties"><svg><use href="#i-options" /></svg></button>
        <button class="tool" type="button" aria-label="Options"><svg><use href="#i-gear" /></svg></button>
        <button class="caret" type="button" aria-label="Options menu"></button>
      </div>
      <span class="doc">Part8 *</span>
      <label class="search">
        <svg class="book" viewBox="0 0 12 12" aria-hidden="true"><path d="m1.500 2 2-1h6l1.500 1.500v7L8 11 1.500 10z" fill="#fff" stroke="#444" /><path d="M1.500 2 5 3v8l-3.500-1z" fill="#555" /><path d="M5 3h3v8" fill="none" stroke="#444" /></svg>
        <input type="text" placeholder="Search Knowledge Base" aria-label="Search Knowledge Base" />
        <svg class="lens" viewBox="0 0 14 14" aria-hidden="true"><circle cx="8.500" cy="5.500" r="4.200" fill="#eaf4fa" stroke="#4c8db3" /><path d="m5.500 8.500-4 4" stroke="#4c8db3" stroke-width="2" /></svg>
        <span class="caret"></span>
      </label>
      <div class="account">
        <button type="button" aria-label="Sign in">
          <svg class="user" viewBox="0 0 14 20"><path d="M1 19v-5c0-3 2-4 3.500-4.500C1 6 3 1 7 1s6 5 2.500 8.500C11 10 13 11 13 14v5z" fill="url(#grey)" stroke="#999" /><path d="M4 9.500c2 1 4 1 6 0" fill="none" stroke="#999" /></svg>
        </button>
        <button class="help" type="button">?</button>
        <button class="caret" type="button" aria-label="Help menu"></button>
      </div>
      <div class="window">
        <button v-for="w in ['min', 'span', 'restore', 'close']" :key="w" type="button" :aria-label="w"><svg><use :href="'#i-' + w" /></svg></button>
      </div>
    </header>

    <div class="ribbon" role="toolbar" aria-label="Features">
      <div v-for="g in ribbon" :key="g.key" class="group" :class="g.key">
        <template v-for="r in g.items" :key="r.icon">
          <button class="feature" :class="{ active: r.active }" type="button" :aria-label="r.label"><svg><use :href="'#i-' + r.icon" /></svg></button>
          <button v-if="r.menu" class="caret" type="button" :aria-label="r.label + ' menu'"></button>
        </template>
      </div>
    </div>

    <main class="workspace">
      <nav class="tabs" aria-label="Command tabs">
        <button v-for="(t, n) in tabs" :key="t" type="button" :class="{ current: n === 0 }">{{ t }}</button>
      </nav>

      <div class="body">
        <aside class="panel">
          <div class="grip"></div>
          <div class="managers">
            <button v-for="m in managers" :key="m.label" type="button" :class="{ current: m.active }" :aria-label="m.label"><svg><use :href="'#i-' + m.icon" /></svg></button>
            <div class="pager">
              <button type="button" aria-label="Previous manager"><i class="to-left"></i></button>
              <button type="button" aria-label="Next manager"><i class="to-right"></i></button>
            </div>
          </div>
          <div class="filter">
            <svg viewBox="0 0 12 12" aria-hidden="true"><path d="M1 2.500h10L7.500 6.500V10L5 11V6.500z" fill="#a8cfdf" stroke="#3a6f8a" /><path d="M1.500 2.500h9" stroke="#27566e" stroke-width="1.500" /></svg>
            <input type="text" aria-label="Filter tree" />
          </div>
          <ul class="tree">
            <li v-for="(n, k) in tree" :key="k" :class="{ root: n.root, child: n.child }">
              <span class="twist"><i v-if="n.x" :class="n.x"></i></span>
              <svg><use :href="'#i-' + n.i" /></svg>
              <span class="name">{{ n.t }}</span>
            </li>
          </ul>
          <div class="rollback"></div>
          <div class="scroll">
            <button type="button" aria-label="Scroll left"><svg viewBox="0 0 8 8"><path d="M5.500 1 2.500 4l3 3" /></svg></button>
            <div class="track"><div class="thumb"></div></div>
            <button type="button" aria-label="Scroll right"><svg viewBox="0 0 8 8"><path d="m2.500 1 3 3-3 3" /></svg></button>
          </div>
          <button class="handle" type="button" aria-label="Collapse panel"></button>
        </aside>

        <section class="canvas" aria-label="Model view">
          <svg class="model" viewBox="146 73 878 459">
            <defs>
              <radialGradient id="sphere" gradientUnits="userSpaceOnUse" cx="598" cy="240" r="215">
                <stop offset="0" stop-color="#8b8b8b" /><stop offset="0.35" stop-color="#797979" /><stop offset="0.65" stop-color="#555" /><stop offset="1" stop-color="#2b2b2b" />
              </radialGradient>
              <radialGradient id="rim" gradientUnits="userSpaceOnUse" cx="559" cy="309.500" r="138">
                <stop offset="0.8" stop-color="#111" stop-opacity="0" /><stop offset="1" stop-color="#111" stop-opacity="0.25" />
              </radialGradient>
              <linearGradient id="rod-mid" x1="0" y1="0" x2="0" y2="1"><stop offset="0.1" stop-color="#484848" /><stop offset="0.5" stop-color="#7e7e7e" /><stop offset="0.9" stop-color="#484848" /></linearGradient>
              <linearGradient id="rod-light" x1="0" y1="0" x2="0" y2="1"><stop offset="0.1" stop-color="#606060" /><stop offset="0.5" stop-color="#929292" /><stop offset="0.9" stop-color="#5a5a5a" /></linearGradient>
              <linearGradient id="rod-dark" x1="0" y1="0" x2="0" y2="1"><stop offset="0.1" stop-color="#333" /><stop offset="0.5" stop-color="#646464" /><stop offset="0.9" stop-color="#363636" /></linearGradient>
              <linearGradient id="rod-deep" x1="0" y1="0" x2="0" y2="1"><stop offset="0.1" stop-color="#292929" /><stop offset="0.5" stop-color="#4b4b4b" /><stop offset="0.9" stop-color="#2c2c2c" /></linearGradient>
              <radialGradient id="tip" cx="0.5" cy="0.45" r="0.55"><stop offset="0" stop-color="#c4c4c4" /><stop offset="0.7" stop-color="#a0a0a0" /><stop offset="1" stop-color="#6a6a6a" /></radialGradient>
              <filter id="soft" x="-20%" y="-40%" width="140%" height="180%"><feGaussianBlur stdDeviation="1.800" /></filter>
              <clipPath id="inside"><circle cx="559" cy="309.500" r="137" /></clipPath>
            </defs>
            <g filter="url(#soft)" fill="none" stroke="#666" stroke-linecap="round">
              <path d="M346 276q40 6 80 10" stroke-width="6" /><path d="M392 234q24 6 44 18M414 240q14-4 24 8" stroke-width="7" /><path d="M388 349q20 0 40-9" stroke-width="7" stroke="#888" /><path d="M419 308v10" stroke-width="6" stroke="#888" />
            </g>
            <g v-for="(s, k) in back" :key="'b' + k" :transform="place(s)" stroke="#222" stroke-width=".8">
              <path :d="body(s)" :fill="`url(#rod-${s.tone || 'mid'})`" /><path :d="cap(s)" :fill="s.tone === 'dark' ? '#777' : '#a0a0a0'" />
            </g>
            <circle cx="559" cy="309.500" r="137.500" fill="url(#sphere)" stroke="#222" stroke-width="1" />
            <circle cx="559" cy="309.500" r="137" fill="url(#rim)" />
            <g clip-path="url(#inside)">
              <g filter="url(#soft)" fill="none" stroke="#222" stroke-opacity=".38" stroke-linecap="round">
                <path d="M502 226q-42 8-73 33" stroke-width="9" /><path d="M569 293q-10 13-19 30" stroke-width="11" /><path d="M654 292q8 14 13 29" stroke-width="10" /><path d="M465 297q-24 16-42 46" stroke-width="10" stroke-opacity=".25" /><path d="M665 363q0 18-16 36M595 382q-8 18-10 45" stroke-width="12" stroke-opacity=".15" /><path d="M535 176q8 2 14 8" stroke-width="8" />
              </g>
            </g>
            <g v-for="(s, k) in front" :key="'f' + k" stroke="#1c1c1c" stroke-width=".8">
              <g :transform="place(s)">
                <path :d="body(s)" :fill="`url(#rod-${s.tone || 'mid'})`" /><path v-if="!s.ball" :d="cap(s)" fill="#a6a6a6" />
              </g>
              <circle v-if="s.ball" :cx="s.ball[0]" :cy="s.ball[1]" r="7.500" fill="url(#tip)" />
              <circle v-if="s.hole" :cx="s.hole[0]" :cy="s.hole[1]" r="1.500" :fill="s.ball ? '#8a8a8a' : '#222'" />
            </g>
            <circle cx="573" cy="285" r="11" fill="#222" stroke="#111" />
            <circle cx="581.500" cy="270" r="8" fill="url(#tip)" stroke="#222" stroke-width=".8" />
            <circle cx="581.500" cy="270" r="2.200" fill="#999" stroke="#333" stroke-width=".8" />
            <path d="M870.500 359.500v9l2-1.500 1.500 3 1.500-.7-1.500-3h2.500z" fill="#fff" stroke="#555" stroke-width=".8" />
          </svg>
          <svg class="triad" viewBox="0 0 40 40" aria-label="Axis triad">
            <path d="M19.500 26V12" stroke="#196b1f" stroke-width="2.500" /><path d="m19.500 8 3 6.500h-6z" fill="#196b1f" />
            <path d="m19.500 26 10 3.500" stroke="#b81717" stroke-width="2.500" /><path d="m35 31.500-7-.5 2-4.500z" fill="#d91f1f" />
            <path d="m19.500 26-10 4" stroke="#1c1c96" stroke-width="2.500" /><path d="m5 32.500 5-5.500 2 5z" fill="#2020d0" /><circle cx="19.500" cy="26" r="1.500" fill="#1c1c96" />
            <text x="17" y="7" fill="#3fae48">Y</text><text x="33" y="35" fill="#f04848">X</text><text x="1" y="36" fill="#4242e8">Z</text>
          </svg>
        </section>
      </div>

      <div class="views" role="toolbar" aria-label="View">
        <template v-for="v in views" :key="v.icon">
          <button class="view" type="button" :aria-label="v.label"><svg><use :href="'#i-' + v.icon" /></svg></button>
          <button v-if="v.menu" class="caret" type="button" :aria-label="v.label + ' menu'"></button>
        </template>
      </div>
      <div class="doc-controls">
        <button v-for="d in docControls" :key="d" type="button" :aria-label="d"><svg><use :href="'#i-' + d" /></svg></button>
      </div>
      <nav class="tasks" aria-label="Task pane">
        <button v-for="t in taskPane" :key="t.label" type="button" :class="{ current: t.active }" :aria-label="t.label"><svg><use :href="'#i-' + t.icon" /></svg></button>
      </nav>
    </main>

    <nav class="sheets" aria-label="Sheets">
      <div class="steps">
        <button v-for="s in ['First', 'Previous', 'Next', 'Last']" :key="s" type="button" :aria-label="s">
          <svg viewBox="0 0 8 8"><path v-if="s === 'First' || s === 'Previous'" d="M6 1.500v5L3 4z" /><path v-else d="M2 1.500v5L5 4z" /><path v-if="s === 'First'" d="M1 1h1v6H1z" /><path v-if="s === 'Last'" d="M6 1h1v6H6z" /></svg>
        </button>
      </div>
      <button class="sheet current" type="button">Model</button>
      <button class="sheet" type="button">Motion Study 1</button>
    </nav>

    <footer class="status">
      <span class="version">SOLIDWORKS Premium 2019 SP2.0</span>
      <span class="cell gap"></span>
      <span class="cell mode">Editing Part</span>
      <span class="cell gap wide"></span>
      <span class="cell units">MMGS <i></i></span>
      <svg class="tag" viewBox="0 0 10 8" aria-hidden="true"><path d="M1 2q4-3 8 0v3L6 7.500 1 5z" fill="#888" stroke="#555" /><path d="m3 3 3 1 2-1" stroke="#eee" fill="none" /></svg>
      <span class="flash"></span>
    </footer>
  </div>
</template>

<style>
html,
body {
  background: #f7f7f7;
}
</style>

<style scoped>
.library {
  position: absolute;
  width: 0;
  height: 0;
}
.app {
  display: flex;
  flex-direction: column;
  height: 100vh;
  overflow: hidden;
  box-sizing: border-box;
  background: #f7f7f7;
  color: #333;
  font-family: 'Open Sans', 'Noto Sans', sans-serif;
  font-size: 8px;
  line-height: 12px;
  text-rendering: geometricPrecision;
}
.app * {
  box-sizing: border-box;
}
button,
input {
  margin: 0;
  padding: 0;
  border: 0;
  background: none;
  color: inherit;
  font: inherit;
  text-rendering: inherit;
}
svg {
  display: block;
}
.caret {
  width: 9px;
  flex: none;
  display: flex;
  align-items: center;
  justify-content: center;
}
.caret::before {
  content: '';
  border: 3px solid transparent;
  border-top-color: #444;
  border-bottom: 0;
}
.titlebar {
  display: flex;
  align-items: center;
  height: 30px;
  flex: none;
  border-bottom: 1px solid #bbb;
}
.brand {
  display: flex;
  align-items: center;
  align-self: stretch;
  width: 118px;
  margin-left: 5px;
  padding-left: 5px;
  border-left: 1px solid #ccc;
  background: linear-gradient(105deg, #fff 40%, #d9d9d9);
}
.mark {
  width: 23px;
  height: 23px;
}
.word {
  margin: 6px 0 0 3px;
  color: #d9291c;
  font: italic 400 13px/14px 'Open Sans', sans-serif;
}
.word b {
  font-weight: 800;
}
.menus {
  display: flex;
  align-items: center;
  align-self: stretch;
  gap: 6px;
  width: 208px;
  padding: 2px 0 0 15px;
  border-right: 1px solid #bbb;
}
.menus > button {
  flex: none;
}
.menus > .pin {
  margin-left: auto;
  margin-right: 4px;
}
.pin svg {
  width: 9px;
  height: 9px;
}
.quick {
  display: flex;
  align-items: center;
  align-self: stretch;
  padding-left: 8px;
}
.tool {
  width: 22px;
  height: 24px;
  display: grid;
  place-items: center;
}
.tool svg {
  width: 20px;
  height: 20px;
}
.files {
  display: grid;
  grid-template-columns: repeat(5, 1fr);
  width: 158px;
}
.split {
  display: flex;
}
.picked {
  background: #b3b3b3;
  width: 22px;
}
.boxed {
  height: 24px;
  width: 10px;
  border: 1px solid #ccc;
}
.spaced {
  margin-left: 2px;
}
.quick > .tool:nth-last-child(3) {
  width: 25px;
}
.doc {
  margin: 2px 0 0 40px;
}
.search {
  display: flex;
  align-items: center;
  width: 135px;
  height: 16px;
  margin-left: auto;
  padding: 0 1px 0 4px;
  border: 1px solid #777;
  background: #eff1f6;
}
.book {
  width: 10px;
  height: 11px;
  margin-right: 3px;
}
.search input {
  flex: 1;
  width: 0;
  padding-top: 2px;
  outline: 0;
}
.search input::placeholder {
  color: #888;
  opacity: 1;
}
.lens {
  width: 14px;
  height: 13px;
}
.account {
  display: flex;
  align-items: center;
  padding-left: 6px;
}
.user {
  width: 14px;
  height: 20px;
}
.help {
  width: 26px;
  padding-left: 9px;
  text-align: center;
  font: 800 18px/22px 'Open Sans', sans-serif;
}
.account .caret {
  margin-left: 1px;
  width: 12px;
}
.window {
  display: flex;
  gap: 9px;
  padding: 0 3px;
}
.window svg,
.doc-controls svg {
  width: 16px;
  height: 16px;
}
.ribbon {
  display: flex;
  height: 28px;
  flex: none;
  padding-left: 3px;
  border-bottom: 1px solid #bbb;
}
.group {
  display: flex;
  align-items: center;
  justify-content: space-between;
}
.group + .group {
  border-left: 1px solid #ccc;
  margin-left: 1px;
}
.a {
  width: 122px;
}
.group.b {
  width: 159px;
  padding-left: 1px;
}
.group.c {
  width: 219px;
  padding-left: 1px;
}
.group.d {
  width: 97px;
}
.group .caret {
  width: 12px;
}
.feature {
  width: 24px;
  height: 25px;
  display: grid;
  place-items: center;
}
.feature svg {
  width: 22px;
  height: 22px;
}
.feature.active {
  background: #b0b0b0;
  border: 1px solid #999;
}
.workspace {
  position: relative;
  display: flex;
  flex-direction: column;
  flex: 1;
  min-height: 0;
  background: #fff;
}
.tabs {
  display: flex;
  height: 15px;
  flex: none;
}
.tabs button {
  padding: 2px 4px 0;
  background: #d2d2d2;
  border: 1px solid #b4b4b4;
  border-left: 0;
  border-top: 0;
  white-space: nowrap;
}
.tabs .current {
  background: #f7f7f7;
  border-bottom-color: #f7f7f7;
  color: #111;
  font-weight: 700;
}
.body {
  display: flex;
  flex: 1;
  min-height: 0;
}
.panel {
  position: relative;
  display: flex;
  flex-direction: column;
  width: 146px;
  flex: none;
  background: #f7f7f7;
  border: 1px solid #c4c4c4;
  border-bottom: 0;
}
.grip {
  height: 14px;
  flex: none;
  display: grid;
  place-items: center;
  border-bottom: 1px solid #ccc;
}
.grip::before {
  content: '';
  width: 3px;
  height: 3px;
  border-radius: 50%;
  background: #bbb;
}
.managers {
  position: relative;
  display: flex;
  height: 25px;
  flex: none;
  overflow: hidden;
  border-top: 1px solid #bbb;
}
.managers > button {
  display: grid;
  place-items: center;
  width: 32px;
  flex: none;
  background: #d2d2d2;
  border-right: 1px solid #aaa;
  border-bottom: 1px solid #bbb;
}
.managers > button.current {
  background: #f7f7f7;
  border-bottom: 0;
}
.managers svg {
  width: 20px;
  height: 20px;
}
.managers > button:nth-child(5) {
  place-items: center start;
}
.pager {
  position: absolute;
  right: 1px;
  bottom: 0;
  display: flex;
  gap: 1px;
}
.pager button {
  display: grid;
  place-items: center;
  width: 11px;
  height: 12px;
  background: #fafafa;
}
.to-left,
.to-right {
  border: 2px solid transparent;
}
.to-left {
  border-right-color: #222;
  border-left: 0;
}
.to-right {
  border-left-color: #222;
  border-right: 0;
}
.filter {
  display: flex;
  align-items: center;
  height: 17px;
  flex: none;
  margin-right: 2px;
  padding-left: 2px;
  border: 1px solid #ddd;
}
.filter svg {
  width: 11px;
  height: 11px;
}
.filter input {
  flex: 1;
  width: 0;
  outline: 0;
}
.tree {
  display: grid;
  grid-auto-rows: 1fr;
  height: 294px;
  flex: none;
  margin: 0;
  padding: 0;
  line-height: 10px;
  list-style: none;
}
.tree li {
  display: flex;
  align-items: center;
  min-width: 0;
  white-space: pre;
}
.tree svg {
  width: 11px;
  height: 11px;
  flex: none;
  margin-right: 1px;
}
.name {
  padding-top: 2px;
}
.twist {
  width: 13px;
  flex: none;
  padding-left: 4px;
}
.root .twist {
  width: 1px;
  padding: 0;
}
.root svg {
  margin-right: 0;
}
.child .twist {
  width: 25px;
}
.closed,
.open {
  display: block;
  width: 0;
  border: 2px solid transparent;
}
.closed {
  border-left-color: #555;
  border-right: 0;
}
.open {
  border-top-color: #555;
  border-bottom: 0;
}
.rollback {
  height: 3px;
  flex: none;
  margin-right: 1px;
  background: #2e78c2;
}
.scroll {
  display: flex;
  align-items: center;
  height: 12px;
  margin: auto 0 2px;
}
.scroll button {
  width: 11px;
}
.scroll svg {
  width: 9px;
  height: 9px;
  fill: none;
  stroke: #444;
}
.track {
  flex: 1;
  height: 10px;
  background: #f0f0f0;
}
.thumb {
  width: 83%;
  height: 100%;
  background: #cdcdcd;
}
.handle {
  position: absolute;
  left: 100%;
  top: 50%;
  margin-top: -21px;
  width: 7px;
  height: 26px;
  display: grid;
  place-items: center;
  background: #f7f7f7;
  border: 1px solid #bbb;
  border-left: 0;
}
.handle::before {
  content: '';
  width: 3px;
  height: 3px;
  border-radius: 50%;
  background: #bbb;
}
.canvas {
  position: relative;
  flex: 1;
  min-width: 0;
}
.model {
  width: 100%;
  height: 100%;
}
.triad {
  position: absolute;
  left: 7px;
  bottom: 22px;
  width: 40px;
  height: 40px;
  font: 7px/8px 'Open Sans', sans-serif;
}
.views {
  position: absolute;
  top: 2px;
  left: 436px;
  display: flex;
  opacity: 0.8;
}
.view {
  width: 24px;
  height: 23px;
  display: grid;
  place-items: center;
}
.view svg {
  width: 21px;
  height: 21px;
}
.views .caret {
  width: 11px;
}
.views .caret::before {
  border-top-color: #777;
}
.doc-controls {
  position: absolute;
  top: 6px;
  right: 7px;
  display: flex;
  gap: 9px;
  color: #999;
}
.tasks {
  position: absolute;
  top: 41px;
  right: 0;
  width: 31px;
  border-left: 1px solid #aaa;
  border-top: 1px solid #aaa;
}
.tasks button {
  display: grid;
  place-items: center;
  width: 100%;
  height: 27px;
  background: #d0d0d0;
  border-bottom: 1px solid #aaa;
}
.tasks button.current {
  background: #fafafa;
}
.tasks svg {
  width: 20px;
  height: 20px;
}
.sheets {
  display: flex;
  height: 12px;
  flex: none;
  border-top: 1px solid #b0b0b0;
  border-bottom: 1px solid #ccc;
  font-size: 9px;
  line-height: 9px;
}
.steps {
  display: flex;
  width: 44px;
  background: #9d9db8;
}
.steps button {
  flex: 1;
  display: grid;
  place-items: center;
  border: 1px solid #84849f;
}
.steps svg {
  width: 7px;
  height: 7px;
  fill: #77778f;
}
.sheet {
  padding: 0 6px;
  background: #d2d2d2;
  border-right: 1px solid #aaa;
}
.sheet.current {
  padding-left: 8px;
  background: #fff;
  color: #111;
  font-weight: 700;
}
.status {
  position: relative;
  display: flex;
  height: 11px;
  flex: none;
  line-height: 11px;
  border-top: 1px solid #ddd;
}
.version {
  flex: 1;
}
.cell {
  border-left: 1px solid #ddd;
}
.gap {
  width: 4px;
}
.gap.wide {
  width: 8px;
}
.mode {
  width: 47px;
  padding-left: 2px;
}
.units {
  width: 95px;
  padding-left: 20px;
}
.units i {
  display: inline-block;
  margin: 0 0 2px 11px;
  border: 2px solid transparent;
  border-bottom-color: #333;
  border-top: 0;
}
.tag {
  width: 10px;
  height: 9px;
  margin-right: 2px;
}
.flash {
  position: absolute;
  left: 288px;
  bottom: 0;
  width: 26px;
  height: 1px;
  background: #f3c9a5;
}
</style>
